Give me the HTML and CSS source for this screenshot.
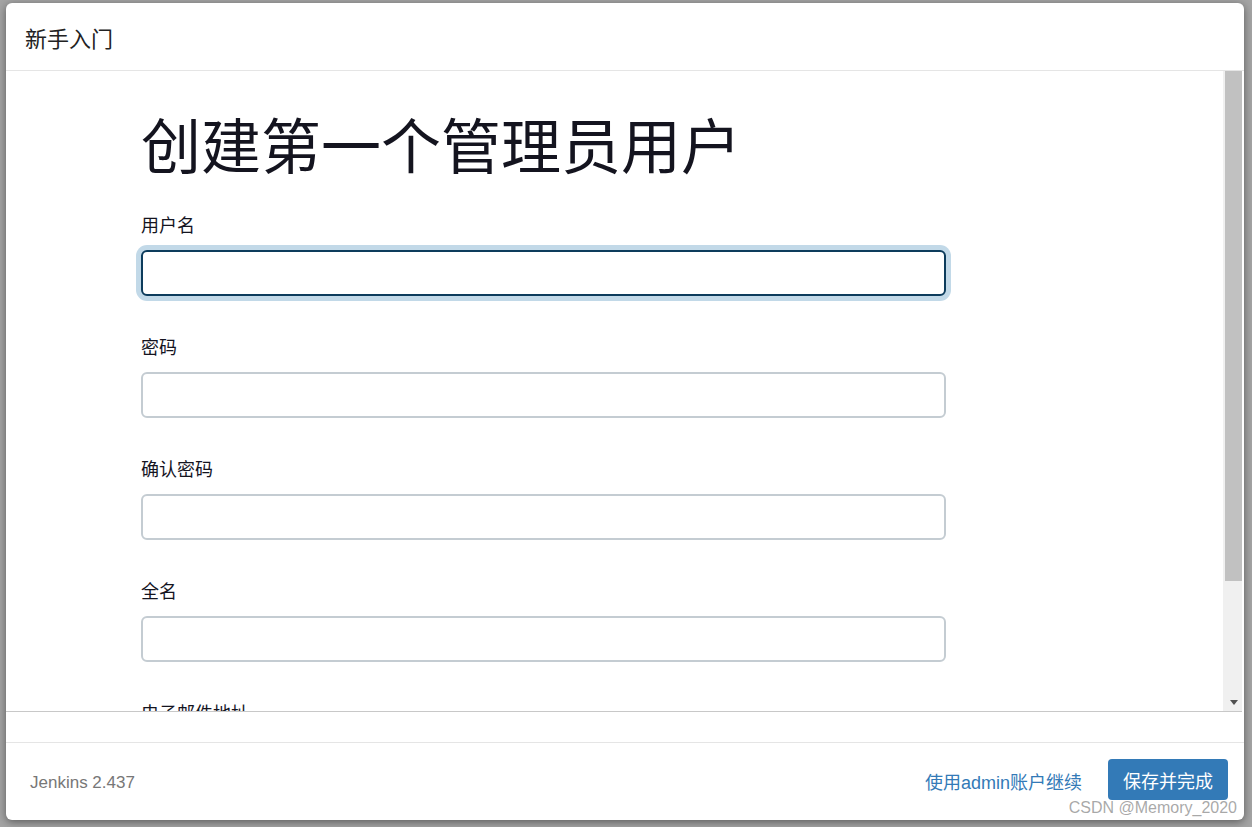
FILE: index.html
```html
<!DOCTYPE html>
<html lang="zh-CN">
<head>
  <meta charset="UTF-8" />
  <title>新手入门</title>
  <link rel="stylesheet" href="styles.css">
</head>
<body>
  <div class="modal">
    <!-- ヘッダー -->
    <div class="modal-header">新手入门</div>

    <!-- 本体（スクロール領域） -->
    <div class="modal-body">
      <div class="frame">
        <div class="frame-content">
          <h1 class="title">创建第一个管理员用户</h1>
          <div class="field">
            <label>用户名</label>
            <div class="input is-focused"></div>
          </div>
          <div class="field">
            <label>密码</label>
            <div class="input"></div>
          </div>
          <div class="field">
            <label>确认密码</label>
            <div class="input"></div>
          </div>
          <div class="field">
            <label>全名</label>
            <div class="input"></div>
          </div>
          <div class="field">
            <label>电子邮件地址</label>
            <div class="input"></div>
          </div>
        </div>
        <div class="scrollbar">
          <div class="thumb"></div>
          <div class="track"></div>
          <div class="arrow-down"></div>
        </div>
      </div>
    </div>

    <!-- フッター -->
    <div class="modal-footer">
      <span class="version">Jenkins 2.437</span>
      <a class="skip-link" href="#">使用admin账户继续</a>
      <button class="btn-primary">保存并完成</button>
    </div>

    <div class="watermark">CSDN @Memory_2020</div>
  </div>
</body>
</html>
```

FILE: styles.css
```css
/* 全体 */
html, body {
  height: 100%;
}
body {
  margin: 0;
  height: 827px;
  box-sizing: border-box;
  padding: 3px 8px 7px 6px;
  background: #a4a4a4;
  font-family: "Liberation Sans", "Noto Sans CJK SC", sans-serif;
  overflow: hidden;
}

/* モーダル */
.modal {
  position: relative;
  height: 100%;
  background: #fff;
  border-radius: 6px;
  box-shadow: 0 2px 8px rgba(0,0,0,0.45);
  display: flex;
  flex-direction: column;
  overflow: hidden;
}

.modal-header {
  height: 67px;
  flex: none;
  border-bottom: 1px solid #e5e5e5;
  padding-left: 19px;
  display: flex;
  align-items: center;
  font-size: 22px;
  color: #222;
}

/* 本体 */
.modal-body {
  flex: none;
  padding-bottom: 30px;
}
.frame {
  height: 640px;
  display: flex;
  border-bottom: 1px solid #c8c8c8;
  margin-right: 2px;
}
.frame-content {
  flex: 1;
  overflow: hidden;
  padding: 45px 0 0 135px;
}

.title {
  margin: 0 0 32px;
  font-size: 60px;
  line-height: 66px;
  font-weight: 400;
  color: #14141f;
}

.field {
  margin-bottom: 40px;
}
.field label {
  display: block;
  font-size: 18px;
  line-height: 24px;
  margin-bottom: 12px;
  color: #14141f;
}
.input {
  width: 805px;
  height: 46px;
  box-sizing: border-box;
  border: 2px solid #c4ccd2;
  border-radius: 6px;
  background: #fff;
}
.input.is-focused {
  border-color: #0d3c5c;
  box-shadow: 0 0 0 5px #c2d9e8;
}

/* スクロールバー */
.scrollbar {
  width: 19px;
  flex: none;
  background: #f0f0f0;
  display: flex;
  flex-direction: column;
  padding-left: 2px;
  box-sizing: border-box;
}
.thumb {
  height: 510px;
  background: #c1c1c1;
}
.track {
  flex: 1;
}
.arrow-down {
  height: 17px;
  display: flex;
  justify-content: center;
  align-items: center;
}
.arrow-down::before {
  content: "";
  border-left: 4.5px solid transparent;
  border-right: 4.5px solid transparent;
  border-top: 5px solid #505050;
}

/* フッター */
.modal-footer {
  flex: 1;
  border-top: 1px solid #e5e5e5;
  padding: 16px 16px 0 24px;
  display: flex;
  align-items: flex-start;
}
.version {
  font-size: 17px;
  color: #777;
  margin-top: 14px;
  margin-right: auto;
}
.skip-link {
  font-size: 18px;
  color: #337ab7;
  text-decoration: none;
  margin-top: 9px;
  margin-right: 26px;
}
.btn-primary {
  height: 41px;
  padding: 0 15px;
  border: none;
  border-radius: 4px;
  background: #337ab7;
  color: #fff;
  font-family: inherit;
  font-size: 18px;
}

/* ウォーターマーク */
.watermark {
  position: absolute;
  right: 7px;
  bottom: 3px;
  font-size: 16px;
  color: rgba(140,140,140,0.75);
}
```
